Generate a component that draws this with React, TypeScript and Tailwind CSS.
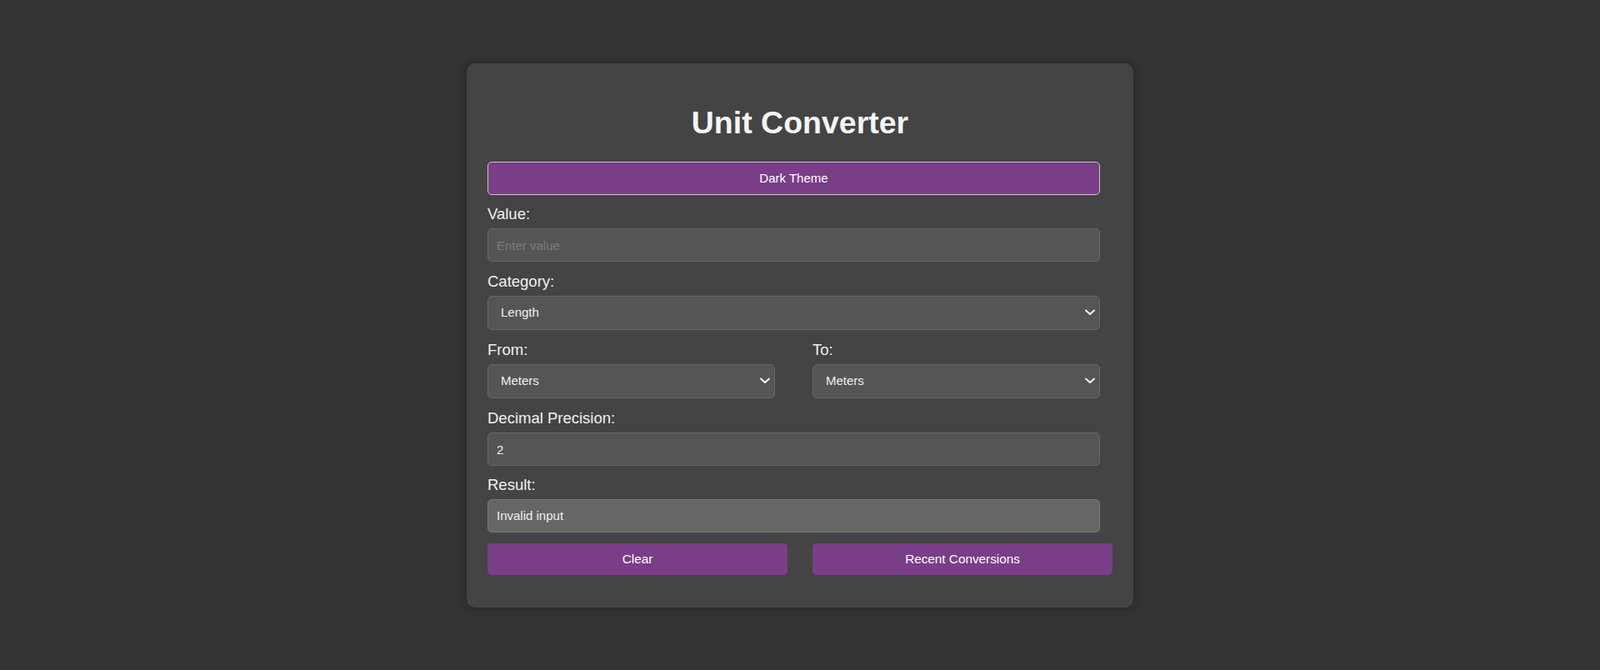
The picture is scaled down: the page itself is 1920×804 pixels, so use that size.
import { useState } from 'react';

const font = { fontFamily: '"Liberation Sans", Arial, sans-serif' };

function Chevron() {
  return (
    <svg
      className="pointer-events-none absolute right-[6px] top-1/2 -translate-y-1/2"
      width="12"
      height="8"
      viewBox="0 0 12 8"
      fill="none"
    >
      <polyline points="1,1.5 6,6 11,1.5" stroke="#f2f2f2" strokeWidth="2" strokeLinecap="round" strokeLinejoin="round" />
    </svg>
  );
}

function Label({ children, className = '' }: { children: React.ReactNode; className?: string }) {
  return (
    <label className={`block text-[18.5px] leading-[21px] text-[#f0f0f0] mb-[7px] ${className}`}>{children}</label>
  );
}

function Select({ value, options, onChange }: { value: string; options: string[]; onChange: (v: string) => void }) {
  return (
    <div className="relative w-[calc(100%-15px)]">
      <select
        value={value}
        onChange={(e) => onChange(e.target.value)}
        className="appearance-none w-full h-[41px] rounded-[5px] border border-[#666] bg-[#555] pl-[15px] pr-8 pt-[1px] text-[15px] text-[#f0f0f0] outline-none"
      >
        {options.map((o) => (
          <option key={o}>{o}</option>
        ))}
      </select>
      <Chevron />
    </div>
  );
}

export default function App() {
  const [value, setValue] = useState('');
  const [category, setCategory] = useState('Length');
  const [from, setFrom] = useState('Meters');
  const [to, setTo] = useState('Meters');
  const [precision, setPrecision] = useState('2');

  const units = ['Meters', 'Kilometers', 'Centimeters', 'Miles', 'Feet', 'Inches'];

  return (
    <div className="min-h-screen bg-[#333] flex items-center justify-center" style={font}>
      <div className="w-[800px] h-[653px] bg-[#444] rounded-[10px] shadow-[0_0_10px_rgba(0,0,0,0.35)] px-[25px] pt-[25px]">
        <h1 className="mt-[25px] mb-[26px] text-center text-[37.5px] leading-[42px] font-bold text-[#f5f5f5]">Unit Converter</h1>

        <button className="w-[calc(100%-15px)] h-[40px] rounded-[5px] border border-[#c8c8c8] bg-[#7a3d88] pt-[1px] text-[15px] text-white">
          Dark Theme
        </button>

        {/* Value */}
        <Label className="mt-[12px]">Value:</Label>
        <input
          value={value}
          onChange={(e) => setValue(e.target.value)}
          placeholder="Enter value"
          className="block w-[calc(100%-15px)] h-[40px] rounded-[5px] border border-[#666] bg-[#555] px-[10px] pt-[1px] text-[15px] text-[#f0f0f0] placeholder:text-[#7a7a7a] outline-none"
        />

        {/* Category */}
        <Label className="mt-[13px]">Category:</Label>
        <Select value={category} options={['Length', 'Weight', 'Temperature', 'Volume']} onChange={setCategory} />

        {/* From / To */}
        <div className="grid grid-cols-2 gap-[30px] mt-[13px]">
          <div>
            <Label>From:</Label>
            <Select value={from} options={units} onChange={setFrom} />
          </div>
          <div>
            <Label>To:</Label>
            <Select value={to} options={units} onChange={setTo} />
          </div>
        </div>

        {/* Precision */}
        <Label className="mt-[13px]">Decimal Precision:</Label>
        <input
          value={precision}
          onChange={(e) => setPrecision(e.target.value)}
          className="block w-[calc(100%-15px)] h-[40px] rounded-[5px] border border-[#666] bg-[#555] px-[10px] pt-[1px] text-[15px] text-[#f0f0f0] outline-none"
        />

        {/* Result */}
        <Label className="mt-[12px]">Result:</Label>
        <div className="flex items-center w-[calc(100%-15px)] h-[40px] rounded-[5px] border border-[#777] bg-[#666] px-[10px] pt-[2px] text-[15px] text-[#f0f0f0]">
          Invalid input
        </div>

        <div className="grid grid-cols-2 gap-[30px] mt-[13px]">
          <button
            onClick={() => setValue('')}
            className="h-[38px] rounded-[5px] bg-[#7a3d88] pt-[1px] text-[15.3px] text-white"
          >
            Clear
          </button>
          <button className="h-[38px] rounded-[5px] bg-[#7a3d88] pt-[1px] text-[15.3px] text-white">Recent Conversions</button>
        </div>
      </div>
    </div>
  );
}
